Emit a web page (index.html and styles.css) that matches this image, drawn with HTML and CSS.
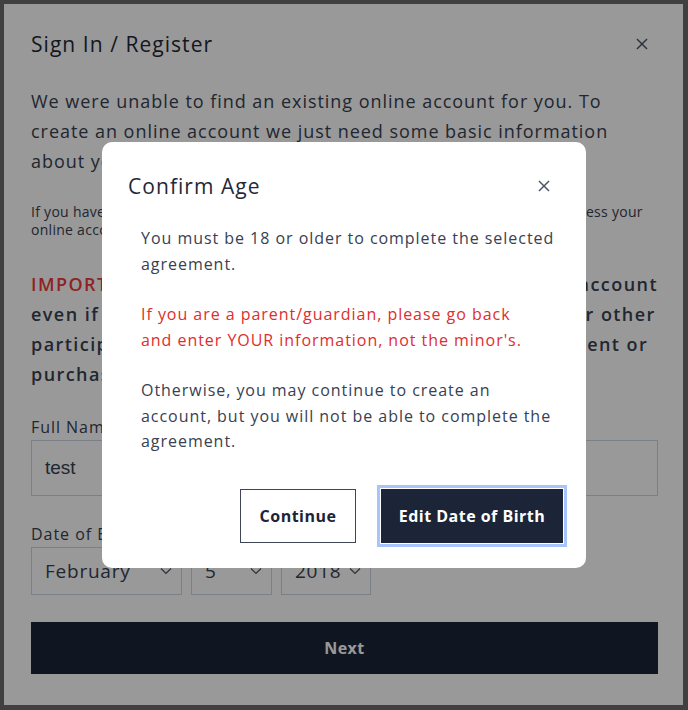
FILE: index.html
```html
<!DOCTYPE html>
<html lang="en">
<head>
    <meta charset="UTF-8">
    <meta name="viewport" content="width=device-width, initial-scale=1.0">
    <title>Sign In / Register</title>
    <link rel="stylesheet" href="styles.css">
</head>
<body>
    <div class="dialog signin">
        <div class="dialog-head">
            <h2>Sign In / Register</h2>
            <button class="close" aria-label="Close">
                <svg viewBox="0 0 24 24" width="22" height="22"><path d="M6.5 6.5l11 11M17.5 6.5l-11 11"/></svg>
            </button>
        </div>
        <p class="lead">We were unable to find an existing online account for you. To create an online account we just need some basic information about you.</p>
        <p class="note">If you have an account under a different email address, please sign in there to access your online account instead of creating a new one.</p>
        <p class="important"><span class="warn">IMPORTANT:</span> Every adult must create their own online account even if you are registering together with your spouse or other participants, so that every person may sign the agreement or purchase passes.</p>

        <label class="field-label">Full Name</label>
        <div class="text-input">test</div>

        <label class="field-label">Date of Birth</label>
        <div class="dob">
            <div class="select month">February
                <svg viewBox="0 0 12 8" width="12" height="8"><path d="M1 1.5l5 5 5-5"/></svg>
            </div>
            <div class="select day">5
                <svg viewBox="0 0 12 8" width="12" height="8"><path d="M1 1.5l5 5 5-5"/></svg>
            </div>
            <div class="select year">2018
                <svg viewBox="0 0 12 8" width="12" height="8"><path d="M1 1.5l5 5 5-5"/></svg>
            </div>
        </div>

        <button class="primary-btn next-btn">Next</button>
    </div>

    <div class="overlay">
        <div class="dialog confirm">
            <div class="dialog-head">
                <h2>Confirm Age</h2>
                <button class="close" aria-label="Close">
                    <svg viewBox="0 0 24 24" width="22" height="22"><path d="M6.5 6.5l11 11M17.5 6.5l-11 11"/></svg>
                </button>
            </div>
            <div class="confirm-body">
                <p>You must be 18 or older to complete the selected agreement.</p>
                <p class="danger">If you are a parent/guardian, please go back and&nbsp;enter YOUR information, not the minor's.</p>
                <p>Otherwise, you may continue to create an account, but you will not be able to complete the agreement.</p>
            </div>
            <div class="confirm-actions">
                <button class="outline-btn">Continue</button>
                <button class="primary-btn focused">Edit Date of Birth</button>
            </div>
        </div>
    </div>
</body>
</html>
```

FILE: styles.css
```css
body {
    margin: 0;
    padding: 4px;
    background: #6b6b6b;
    font-family: 'Open Sans', sans-serif;
    letter-spacing: 0.06em;
    color: #374151;
}
button {
    font-family: inherit;
    letter-spacing: inherit;
}
.dialog {
    background: white;
    box-sizing: border-box;
}
.signin {
    width: 679px;
    height: 701px;
    padding: 26px 25px 32px 27px;
}
.dialog-head {
    display: flex;
    align-items: center;
    justify-content: space-between;
}
.dialog-head h2 {
    margin: 0;
    font-size: 21px;
    line-height: 28px;
    font-weight: 500;
    letter-spacing: 0.05em;
    color: #1f2937;
}
.close {
    width: 28px;
    height: 28px;
    padding: 0;
    border: none;
    background: none;
    display: flex;
    align-items: center;
    justify-content: center;
}
.close svg {
    fill: none;
    stroke: #4b5563;
    stroke-width: 1.6;
}
.signin .close {
    margin-right: 2px;
}
.lead {
    margin: 28px 0 0;
    font-size: 18px;
    line-height: 30px;
}
.note {
    margin: 27px 0 0;
    font-size: 14px;
    line-height: 18px;
    letter-spacing: 0.02em;
}
.important {
    margin: 30px 0 0;
    font-size: 18px;
    line-height: 30px;
    font-weight: 600;
    letter-spacing: 0.08em;
}
.warn {
    color: #ee3b3b;
}
.field-label {
    display: block;
    margin-top: 26px;
    font-size: 16px;
    line-height: 24px;
}
.text-input {
    margin-top: 1px;
    height: 56px;
    box-sizing: border-box;
    border: 1px solid #cbd5e1;
    padding: 0 13px;
    display: flex;
    align-items: center;
    font-family: 'Liberation Sans', Arial, sans-serif;
    letter-spacing: 0;
    font-size: 19px;
}
.dob {
    display: flex;
    gap: 9px;
    margin-top: 1px;
}
.select {
    height: 48px;
    box-sizing: border-box;
    border: 1px solid #cbd5e1;
    padding: 0 9px 0 13px;
    display: flex;
    align-items: center;
    justify-content: space-between;
    font-size: 19px;
    letter-spacing: 0.04em;
}
.select svg {
    fill: none;
    stroke: #4b5563;
    stroke-width: 1.2;
}
.month { width: 151px; }
.day { width: 81px; }
.year { width: 90px; }
.primary-btn {
    background: #1b2537;
    color: white;
    border: 1px solid #1b2537;
    font-weight: 700;
    font-size: 16px;
    letter-spacing: 0.03em;
}
.next-btn {
    display: block;
    width: 100%;
    height: 52px;
    margin-top: 27px;
}
.overlay {
    position: fixed;
    inset: 0;
    background: rgba(0, 0, 0, 0.4);
    display: flex;
    align-items: center;
    justify-content: center;
}
.confirm {
    width: 484px;
    border-radius: 10px;
    padding: 30px 23px 25px 26px;
}
.confirm .close {
    margin-right: 5px;
}
.confirm-body {
    padding: 0 6px 0 13px;
    margin-top: 26px;
    font-size: 16px;
    line-height: 25.6px;
}
.confirm-body p {
    margin: 0 0 25px;
}
.confirm-body p:last-child {
    margin-bottom: 0;
}
.danger {
    color: #e02d2d;
}
.confirm-actions {
    display: flex;
    justify-content: flex-end;
    gap: 25px;
    margin-top: 34px;
}
.outline-btn {
    height: 54px;
    width: 116px;
    background: white;
    border: 1px solid #3e4654;
    color: #1b2537;
    font-weight: 700;
    font-size: 16px;
    letter-spacing: 0.03em;
}
.focused {
    height: 54px;
    width: 182px;
    box-shadow: 0 0 0 1px white, 0 0 0 4px #a8c5fb;
}
```
